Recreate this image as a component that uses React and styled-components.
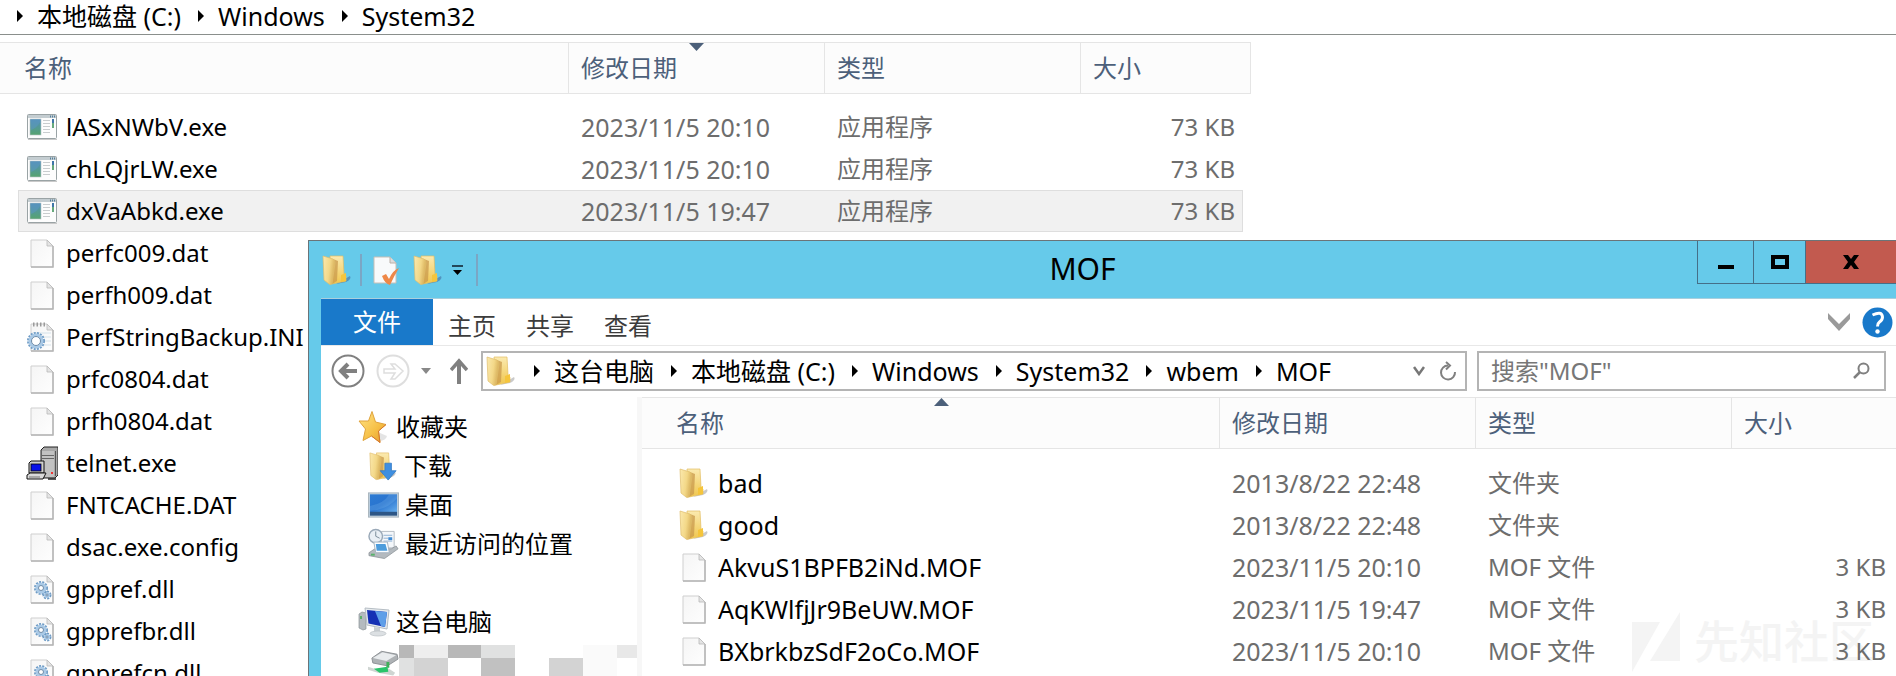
import React from "react";
import styled, { createGlobalStyle, css } from "styled-components";

const GlobalStyle = createGlobalStyle`
  *, *::before, *::after { box-sizing: border-box; }
  body {
    margin: 0;
    background: #fff;
    color: #000;
    font-family: "Noto Sans", "Noto Sans CJK SC", sans-serif;
    font-size: 24px;
    line-height: 32px;
  }
  button, input { font: inherit; color: inherit; }
  a { color: inherit; text-decoration: none; }
  svg { display: block; flex: none; }
`;

const Desktop = styled.div`
  position: relative;
  height: 100vh;
  overflow: hidden;
`;

/* ---------- shared pieces ---------- */

const Trail = styled.nav`
  display: flex;
  align-items: center;
  font-size: 25px;
  white-space: nowrap;
`;

const TrailArrow = styled.svg`
  margin: 0 14px 0 17px;
`;

const Table = styled.table`
  table-layout: fixed;
  width: ${(p) => p.$width || "100%"};
  border-collapse: separate;
  border-spacing: 0;

  tbody::before {
    content: "";
    display: block;
    height: ${(p) => p.$gap};
  }
`;

const HeadCell = styled.th`
  position: relative;
  height: 52px;
  padding: 0 0 0 ${(p) => p.$indent || "12px"};
  background: #fcfcfc;
  border: 0 solid #e5e5e5;
  border-width: 1px ${(p) => (p.$open ? "0" : "1px")} 1px 0;
  color: #4c607a;
  font-weight: 400;
  text-align: left;
`;

const HeadGap = styled.td`
  background: #fcfcfc;
  border: 0 solid #e5e5e5;
  border-width: 1px 0;
`;

const SortMark = styled.svg`
  position: absolute;
  top: 0;
  left: calc(50% - 8px);
`;

const Cell = styled.td`
  height: 42px;
  padding: 0 0 0 12px;
  color: #6d6d6d;
  white-space: nowrap;
  ${(p) => p.$size && css`text-align: right; padding-right: ${p.$size};`}
`;

const DateCell = styled(Cell)`
  font-size: 25px;
`;

const NameCell = styled(Cell)`
  padding-left: ${(p) => p.$indent};
  color: #000;
`;

const Row = styled.tr`
  ${(p) =>
    p.$selected &&
    css`
      ${Cell} {
        background: #f1f1f1;
        border: 0 solid #dedede;
        border-width: 1px 0;
      }
      ${Cell}:nth-child(2) { border-left-width: 1px; padding-left: 7px; }
      ${Cell}:nth-last-child(2) { border-right-width: 1px; padding-right: 7px; }
    `}
`;

const FileName = styled.span`
  display: flex;
  align-items: center;
  gap: 8px;
`;

/* ---------- background window ---------- */

const BackBar = styled.header`
  height: 35px;
  padding-bottom: 2px;
  display: flex;
  align-items: center;
  border-bottom: 1px solid #8a8f8c;
  margin-bottom: 7px;
`;

/* ---------- foreground window ---------- */

const Window = styled.section`
  position: absolute;
  top: 240px;
  left: 308px;
  right: 0;
  bottom: 0;
  display: flex;
  flex-direction: column;
  padding-left: 12px;
  border: 0 solid #6b7478;
  border-width: 1px 0 0 1px;
  background: #66caea;
`;

const TitleBar = styled.header`
  display: flex;
  height: 57px;
  flex: none;
`;

const QuickTools = styled.div`
  display: flex;
  align-items: center;
  height: 57px;
`;

const AppButton = styled.button`
  width: 39px;
  padding: 0;
  border: 0;
  background: none;
`;

const ToolButton = styled.button`
  display: grid;
  place-items: center;
  width: ${(p) => p.$width || "38px"};
  height: 32px;
  padding: 0;
  border: 0;
  background: none;
`;

const ToolDivider = styled.span`
  width: 2px;
  height: 32px;
  background: #7ba6c4;
`;

const Title = styled.h1`
  flex: 1;
  margin: 0;
  padding-right: 10px;
  font-size: 30px;
  font-weight: 400;
  line-height: 56px;
  text-align: center;
`;

const Captions = styled.div`
  display: flex;
  justify-content: flex-end;
  align-items: flex-start;
`;

const CaptionButton = styled.button`
  display: grid;
  place-items: center;
  width: ${(p) => p.$width};
  height: 43px;
  padding: 0;
  border: 0 solid #456f88;
  border-width: 0 0 1px 1px;
  background: ${(p) => (p.$close ? "#c25a4f" : "transparent")};
`;

const Client = styled.div`
  display: flex;
  flex-direction: column;
  flex: 1;
  min-height: 0;
  background: #fff;
`;

const Ribbon = styled.div`
  display: flex;
  align-items: stretch;
  height: 48px;
  flex: none;
  border-bottom: 1px solid #e8e8e8;
  border-top: 1px solid #a9cfdd;
`;

const FileTab = styled.button`
  width: 112px;
  padding: 0;
  border: 0;
  background: #1979ca;
  color: #fff;
`;

const RibbonTab = styled.button`
  width: 78px;
  padding: 8px 0 0;
  border: 0;
  background: none;
  color: #3c3c3c;
`;

const RibbonEnd = styled.div`
  display: flex;
  align-items: center;
  gap: 11px;
  margin-left: auto;
  padding-right: 3px;
`;

const PlainButton = styled.button`
  display: grid;
  place-items: center;
  padding: 0;
  border: 0;
  background: none;
`;

const NavBar = styled.div`
  display: flex;
  align-items: center;
  height: 51px;
  flex: none;
  padding: 0 10px 2px;
`;

const History = styled.div`
  display: flex;
  align-items: center;
  gap: 11px;
  width: 150px;
  flex: none;
`;

const AddressBox = styled.div`
  display: flex;
  align-items: center;
  flex: 1;
  height: 40px;
  margin-right: 10px;
  padding: 0 8px 0 2px;
  border: 2px solid #b4b4b4;
`;

const AddressEnd = styled.div`
  display: flex;
  align-items: center;
  gap: 14px;
  margin-left: auto;
`;

const SearchBox = styled.label`
  display: flex;
  align-items: center;
  width: 409px;
  height: 40px;
  padding: 0 14px 0 12px;
  border: 2px solid #b4b4b4;

  input {
    flex: 1;
    min-width: 0;
    height: 32px;
    padding: 0;
    border: 0;
    outline: 0;
    background: none;
  }
  input::placeholder { color: #777; opacity: 1; }
`;

const Body = styled.div`
  display: flex;
  flex: 1;
  min-height: 0;
`;

const Side = styled.nav`
  width: 321px;
  flex: none;
  padding: 10px 0 0 37px;
  border-right: 5px solid #f7f7f7;
  overflow: hidden;
`;

const SideGroup = styled.div`
  margin-bottom: 39px;
`;

const SideLink = styled.a`
  display: flex;
  align-items: center;
  gap: 6px;
  height: 39px;
  padding-left: ${(p) => (p.$child ? "10px" : "0")};
  white-space: nowrap;
`;

const Redacted = styled.svg`
  margin-left: -6px;
`;

const Files = styled.main`
  position: relative;
  flex: 1;
  min-width: 0;
  overflow: hidden;
`;

const Watermark = styled.div`
  position: absolute;
  right: 22px;
  bottom: 4px;
  display: flex;
  align-items: center;
  gap: 14px;
  color: #f4f4f4;
  font-size: 45px;
  font-weight: 500;
  line-height: 60px;
`;

const FileTable = styled(Table)`
  position: relative;
  z-index: 1;

  ${NameCell} { font-size: 25px; }
`;

/* ---------- icons ---------- */

const Defs = () => (
  <svg width="0" height="0" style={{ position: "absolute" }} aria-hidden="true">
    <defs>
      <linearGradient id="fFront" x1="0" x2="1" y1="0" y2="0.3">
        <stop offset="0" stopColor="#fbe9ae" />
        <stop offset="0.6" stopColor="#f3d888" />
        <stop offset="1" stopColor="#d9b25c" />
      </linearGradient>
      <linearGradient id="fBack" x1="0" x2="0" y1="0" y2="1">
        <stop offset="0" stopColor="#fbeab0" />
        <stop offset="1" stopColor="#f0c64e" />
      </linearGradient>
      <linearGradient id="page" x1="0" x2="1" y1="0" y2="1">
        <stop offset="0" stopColor="#f5f5f5" />
        <stop offset="1" stopColor="#fefefe" />
      </linearGradient>
      <linearGradient id="exe" x1="0" x2="0" y1="0" y2="1">
        <stop offset="0" stopColor="#4f8fbd" />
        <stop offset="1" stopColor="#57a46f" />
      </linearGradient>
      <linearGradient id="sky" x1="0" x2="1" y1="0" y2="1">
        <stop offset="0" stopColor="#2c7bd4" />
        <stop offset="0.5" stopColor="#2a74cf" />
        <stop offset="1" stopColor="#68b0ee" />
      </linearGradient>
      <linearGradient id="star" x1="0" x2="1" y1="0" y2="1">
        <stop offset="0" stopColor="#ffe58a" />
        <stop offset="0.6" stopColor="#f6bf45" />
        <stop offset="1" stopColor="#e39a2b" />
      </linearGradient>
    </defs>
  </svg>
);

const FolderShape = ({ shade = "#bdbdbd" }) => (
  <>
    <path d="M15 30 L29 22 Q31 25 25 28 Z" fill={shade} opacity="0.8" />
    <path d="M9 2 L22 2 L23 20 L25 22 L25 27 L11 30 Z" fill="url(#fBack)" stroke="#e3bd62" strokeWidth="0.7" />
    <path d="M12 5 L17 7 L16 27 L11 30 Z" fill="#c99a4c" opacity="0.75" />
    <path d="M2 2 L12 5 Q14 6 14 9 L11 30 Q9 31 8 30 L3 26 Z" fill="url(#fFront)" stroke="#e0bd6c" strokeWidth="0.7" />
    <path d="M20 21 L25 19 L25 27 L20 28 Z" fill="#f5c53c" />
  </>
);

const Folder = ({ shade }) => (
  <svg width="32" height="32" viewBox="0 0 32 32" aria-hidden="true">
    <FolderShape shade={shade} />
  </svg>
);

const Download = () => (
  <svg width="30" height="32" viewBox="0 0 32 32" aria-hidden="true">
    <FolderShape />
    <path d="M18 13 h7 v8 h5 L21.500 31 L13 21 h5 Z" fill="#3f8fe0" stroke="#2f78c4" strokeWidth="0.8" />
  </svg>
);

const PageShape = () => (
  <>
    <path d="M5 3 H21 L27 9 V30 H5 Z" fill="url(#page)" stroke="#cfcfcf" />
    <path d="M27 9 V30 H5" fill="none" stroke="#b5b5b5" strokeWidth="1.500" />
    <path d="M21 3 V9 H27 Z" fill="#e4e4e4" stroke="#b9b9b9" strokeWidth="0.8" />
  </>
);

const Page = () => (
  <svg width="32" height="32" viewBox="0 0 32 32" aria-hidden="true"><PageShape /></svg>
);

const Gear = ({ cx, cy, r, w }) => (
  <>
    <circle cx={cx} cy={cy} r={r + w / 2 + 0.5} fill="none" stroke="#6f9cc6" strokeWidth="2" strokeDasharray="2 1.200" />
    <circle cx={cx} cy={cy} r={r} fill="none" stroke="#a9c9e6" strokeWidth={w} />
    <circle cx={cx} cy={cy} r={r - w / 2} fill="#fff" stroke="#5f7f9e" strokeWidth="0.9" />
  </>
);

const Dll = () => (
  <svg width="32" height="32" viewBox="0 0 32 32" aria-hidden="true">
    <PageShape />
    <Gear cx={21} cy={22} r={2} w={2} />
    <Gear cx={15} cy={15} r={4} w={3} />
  </svg>
);

const Ini = () => (
  <svg width="32" height="32" viewBox="0 0 32 32" aria-hidden="true">
    <PageShape />
    <path d="M7 3.500 h12" stroke="#9a9a9a" strokeWidth="4" strokeDasharray="1.500 2" />
    <path d="M8 12 h17 M8 16 h17 M8 20 h17 M8 24 h17" stroke="#d5e2ea" />
    <Gear cx={10} cy={20} r={6} w={3} />
  </svg>
);

const Exe = () => (
  <svg width="32" height="32" viewBox="0 0 32 32" aria-hidden="true">
    <rect x="1.500" y="3.500" width="29" height="24" rx="1" fill="#fdfdfd" stroke="#9aa3a5" />
    <path d="M2 4 h28 v3 h-28 z" fill="#c4cdd1" />
    <path d="M24 5.500 h5" stroke="#55809c" strokeWidth="2" strokeDasharray="1 1" />
    <rect x="4" y="8" width="11" height="16" fill="url(#exe)" stroke="#b8c4c8" strokeWidth="0.6" />
    <path d="M5 19 Q11 17 14 11 V9 H5 Z" fill="#5c96c0" opacity="0.6" />
    <path d="M17 9.500 h7 M17 12.500 h7 M17 15.500 h7 M17 18.500 h7 M17 21.500 h7" stroke="#c9cdcf" />
    <rect x="26" y="8" width="2" height="9" fill="#3f76a8" />
    <rect x="26" y="12" width="2" height="5" fill="#67a97c" />
    <path d="M2 28.500 h29" stroke="#c9c9c9" />
  </svg>
);

const Telnet = () => (
  <svg width="32" height="34" viewBox="0 0 32 34" aria-hidden="true">
    <path d="M15 4 L18 1 H32 V29 L29 32 H15 Z" fill="#a9a9a9" stroke="#222" strokeWidth="1" />
    <path d="M16 5 H28 V31 H16 Z" fill="#c2c2c2" />
    <path d="M16 9.500 H28 M16 12.500 H28" stroke="#666" />
    <path d="M29.500 5 V30" stroke="#555" />
    <rect x="25" y="26" width="2" height="2" fill="#e33" />
    <path d="M3 17 L5 15 H18 V27 H3 Z" fill="#d0d0d0" stroke="#111" />
    <rect x="5" y="18" width="10" height="7" fill="#0a12e8" stroke="#000" strokeWidth="0.8" />
    <path d="M1 29 L4 27 H20 L17 33 H1 Z" fill="#dadada" stroke="#111" />
    <path d="M3 31 H14" stroke="#777" />
    <path d="M22 33 H30" stroke="#222" strokeWidth="1.500" />
  </svg>
);

const Star = () => (
  <svg width="32" height="34" viewBox="0 0 32 34" aria-hidden="true">
    <path d="M20 31 Q28 31 29 26 L22 23 Z" fill="#d8d8d8" opacity="0.7" />
    <path d="M14 1.500 L17.500 12 L28 14.500 L20.500 21 L22 32.500 L13.500 26 L5 30.500 L7.500 19 L1 11 L10.500 11 Z" fill="url(#star)" stroke="#e0a33c" />
    <path d="M28 14.500 L20.500 21 L22 32.500 L13.500 26" fill="none" stroke="#d7782e" />
  </svg>
);

const DesktopIcon = () => (
  <svg width="31" height="26" viewBox="0 0 32 26" aria-hidden="true">
    <rect x="0.500" y="0.500" width="31" height="25" fill="#c3d2de" stroke="#a9b5be" />
    <rect x="2" y="2" width="28" height="19" fill="url(#sky)" />
    <path d="M2 14 Q16 12 22 2 H30 V6 Q20 18 2 19 Z" fill="#75b2ec" opacity="0.3" />
    <rect x="2" y="20" width="28" height="4" fill="#2d5686" />
  </svg>
);

const Recent = () => (
  <svg width="31" height="32" viewBox="0 0 32 32" aria-hidden="true">
    <path d="M14 3 H27 V20 H14 Z" fill="#f4f7fa" stroke="#b5bcc3" />
    <path d="M16 7 h9 M16 10 h5 M16 13 h9" stroke="#8fb2d4" />
    <rect x="21" y="9" width="4" height="3" fill="#3f8bd4" />
    <circle cx="8" cy="8" r="7" fill="#e9eff5" stroke="#9aa9b8" strokeWidth="1.500" />
    <path d="M8 3 V8 L12 10" fill="none" stroke="#7a8a9a" />
    <path d="M1 25 L7 21 H24 L29 18 L31 21 L17 31 L1 28 Z" fill="#b4babf" stroke="#8c9297" strokeWidth="0.8" />
    <path d="M6 14 H20 L22 25 H8 Z" fill="#fafdff" stroke="#a6b4c0" />
    <path d="M8 16 H18 L20 23 H9 Z" fill="#4c9cdc" />
    <rect x="3" y="26" width="4" height="2" fill="#59b36b" />
  </svg>
);

const Computer = () => (
  <svg width="32" height="30" viewBox="0 0 32 30" aria-hidden="true">
    <path d="M1 7 L4 5 L8 6 V22 L5 23 L1 21 Z" fill="#b4babf" stroke="#8b9297" strokeWidth="0.7" />
    <rect x="2" y="9" width="2" height="3" fill="#5bb06a" />
    <path d="M7 1 L31 3 L29 22 L9 18 Z" fill="#e7ebee" stroke="#b5bdc4" />
    <path d="M9 3 L29 5 L27 20 L10.500 16.500 Z" fill="#1530b4" />
    <path d="M17 4 L29 5 L27 20 L23 19 Z" fill="#5f9fe8" />
    <path d="M16 20 L22 21 L22 25 L16 25 Z" fill="#c9ced2" />
    <ellipse cx="20" cy="26.500" rx="8" ry="2.500" fill="#dce0e3" stroke="#b9bec3" strokeWidth="0.7" />
  </svg>
);

const Drive = () => (
  <svg width="31" height="30" viewBox="0 0 32 30" aria-hidden="true">
    <path d="M4 12 L14 5 L30 8 L31 13 L20 20 L5 17 Z" fill="#aeb2b5" stroke="#8d9296" />
    <path d="M5 12 L15 6 L29 9 L19 15 Z" fill="#e9ecee" />
    <rect x="19" y="16" width="3" height="6" fill="#3fae5a" />
    <path d="M0 21 L10 24 L20 22 L28 27 L26 30 L10 27 L0 24 Z" fill="#cfd5d2" />
    <path d="M6 23 L20 21 L21 26 L12 27 Z" fill="#29c46a" />
  </svg>
);

const CheckPage = () => (
  <svg width="30" height="32" viewBox="0 0 30 32" aria-hidden="true">
    <path d="M2 3 H18 L24 9 V29 H2 Z" fill="#f8fafb" stroke="#c8bfb6" />
    <path d="M18 3 V9 H24" fill="#ddd" stroke="#b8b0a8" />
    <path d="M10 22 L14 20 L17 25 Q21 16 27 14 Q22 22 18 31 Q13 30 10 22 Z" fill="#ee8848" />
  </svg>
);

const ArrowRight = () => (
  <TrailArrow width="6" height="12" viewBox="0 0 6 12" aria-hidden="true">
    <path d="M0 0 L6 6 L0 12 Z" fill="#000" />
  </TrailArrow>
);

const SortDown = () => (
  <SortMark width="15" height="8" viewBox="0 0 15 8" aria-hidden="true"><path d="M0 0 H15 L7.500 8 Z" fill="#4c607a" /></SortMark>
);

const SortUp = () => (
  <SortMark width="15" height="8" viewBox="0 0 15 8" aria-hidden="true"><path d="M0 8 H15 L7.500 0 Z" fill="#4c607a" /></SortMark>
);

const Mosaic = () => (
  <Redacted width="238" height="32" viewBox="0 0 238 32" aria-label="已隐藏">
    <path d="M0 0h15v13H0zM49 0h33v13H49z" fill="#b8b8b8" />
    <path d="M15 0h34v13H15z" fill="#eeeeee" />
    <path d="M82 0h34v13H82zM0 13h15v19H0z" fill="#e0e1e1" />
    <path d="M184 0h34v32h-34z" fill="#fafafa" />
    <path d="M218 0h20v13h-20z" fill="#e8e8e8" />
    <path d="M15 13h34v19H15zM150 13h34v19h-34z" fill="#d3d3d3" />
    <path d="M82 13h34v19H82z" fill="#c1c1c1" />
  </Redacted>
);

/* ---------- data ---------- */

const icons = { exe: Exe, page: Page, ini: Ini, telnet: Telnet, dll: Dll, folder: Folder };

const systemFiles = [
  { name: "lASxNWbV.exe", icon: "exe", date: "2023/11/5 20:10", type: "应用程序", size: "73 KB" },
  { name: "chLQjrLW.exe", icon: "exe", date: "2023/11/5 20:10", type: "应用程序", size: "73 KB" },
  { name: "dxVaAbkd.exe", icon: "exe", date: "2023/11/5 19:47", type: "应用程序", size: "73 KB", selected: true },
  { name: "perfc009.dat", icon: "page" },
  { name: "perfh009.dat", icon: "page" },
  { name: "PerfStringBackup.INI", icon: "ini" },
  { name: "prfc0804.dat", icon: "page" },
  { name: "prfh0804.dat", icon: "page" },
  { name: "telnet.exe", icon: "telnet" },
  { name: "FNTCACHE.DAT", icon: "page" },
  { name: "dsac.exe.config", icon: "page" },
  { name: "gppref.dll", icon: "dll" },
  { name: "gpprefbr.dll", icon: "dll" },
  { name: "gpprefcn.dll", icon: "dll" },
];

const mofFiles = [
  { name: "bad", icon: "folder", date: "2013/8/22 22:48", type: "文件夹" },
  { name: "good", icon: "folder", date: "2013/8/22 22:48", type: "文件夹" },
  { name: "AkvuS1BPFB2iNd.MOF", icon: "page", date: "2023/11/5 20:10", type: "MOF 文件", size: "3 KB" },
  { name: "AqKWlfjJr9BeUW.MOF", icon: "page", date: "2023/11/5 19:47", type: "MOF 文件", size: "3 KB" },
  { name: "BXbrkbzSdF2oCo.MOF", icon: "page", date: "2023/11/5 20:10", type: "MOF 文件", size: "3 KB" },
];

const Breadcrumbs = ({ parts }) => (
  <Trail aria-label="路径">
    {parts.map((part) => (
      <React.Fragment key={part}>
        <ArrowRight />
        <a href="#path">{part}</a>
      </React.Fragment>
    ))}
  </Trail>
);

const Entry = ({ file }) => {
  const Icon = icons[file.icon];
  return <FileName><Icon />{file.name}</FileName>;
};

export default function App() {
  return (
    <Desktop>
      <GlobalStyle />
      <Defs />
      <BackBar>
        <Breadcrumbs parts={["本地磁盘 (C:)", "Windows", "System32"]} />
      </BackBar>
      <Table $width="1251px" $gap="12px">
        <colgroup>
          <col style={{ width: 18 }} />
          <col style={{ width: 551 }} />
          <col style={{ width: 256 }} />
          <col style={{ width: 256 }} />
          <col style={{ width: 162 }} />
          <col style={{ width: 8 }} />
        </colgroup>
        <thead>
          <tr>
            <HeadCell colSpan={2} $indent="24px">名称</HeadCell>
            <HeadCell>修改日期<SortDown /></HeadCell>
            <HeadCell>类型</HeadCell>
            <HeadCell colSpan={2}>大小</HeadCell>
          </tr>
        </thead>
        <tbody>
          {systemFiles.map((f) => (
            <Row key={f.name} $selected={f.selected}>
              <td />
              <NameCell $indent="8px"><Entry file={f} /></NameCell>
              <DateCell>{f.date}</DateCell>
              <Cell>{f.type}</Cell>
              <Cell $size="8px">{f.size}</Cell>
              <td />
            </Row>
          ))}
        </tbody>
      </Table>

      <Window aria-label="MOF">
        <TitleBar>
          <QuickTools>
            <AppButton aria-label="窗口菜单"><Folder shade="#4d86b4" /></AppButton>
            <ToolDivider />
            <ToolButton $width="50px" aria-label="属性"><CheckPage /></ToolButton>
            <ToolButton $width="26px" aria-label="新建文件夹"><Folder shade="#4d86b4" /></ToolButton>
            <ToolButton aria-label="自定义快速访问工具栏">
              <svg width="11" height="10" viewBox="0 0 11 10"><path d="M0 1 H11" stroke="#24485a" strokeWidth="2" /><path d="M1 5 H10 L5.500 10 Z" /></svg>
            </ToolButton>
            <ToolDivider />
          </QuickTools>
          <Title>MOF</Title>
          <Captions>
            <CaptionButton $width="56px" aria-label="最小化">
              <svg width="16" height="14"><rect y="10" width="16" height="4" /></svg>
            </CaptionButton>
            <CaptionButton $width="52px" aria-label="最大化">
              <svg width="18" height="14"><rect x="2" y="2" width="14" height="10" fill="none" stroke="#000" strokeWidth="4" /></svg>
            </CaptionButton>
            <CaptionButton $width="91px" $close aria-label="关闭">
              <svg width="16" height="14" viewBox="0 0 16 14"><path d="M0 0 h5 l3 4 3-4 h5 L11 7 l5 7 h-5 L8 10 5 14 H0 L5 7 Z" /></svg>
            </CaptionButton>
          </Captions>
        </TitleBar>
        <Client>
          <Ribbon>
            <FileTab>文件</FileTab>
            <RibbonTab>主页</RibbonTab>
            <RibbonTab>共享</RibbonTab>
            <RibbonTab>查看</RibbonTab>
            <RibbonEnd>
              <PlainButton aria-label="展开功能区">
                <svg width="24" height="18" viewBox="0 0 24 18"><path d="M1 0 L12 11 L23 0 V6 L12 18 L1 6 Z" fill="#9a9a9a" /></svg>
              </PlainButton>
              <PlainButton aria-label="帮助">
                <svg width="31" height="31" viewBox="0 0 31 31">
                  <circle cx="15.500" cy="15.500" r="15" fill="#1979ca" />
                  <path d="M10.500 8 Q20 3.500 20.500 10 Q20.500 13 17.500 15 Q15.500 16.500 15.500 19.500" fill="none" stroke="#fff" strokeWidth="3" />
                  <circle cx="15.500" cy="24.500" r="2.200" fill="#fff" />
                </svg>
              </PlainButton>
            </RibbonEnd>
          </Ribbon>
          <NavBar>
            <History>
              <PlainButton aria-label="后退">
                <svg width="34" height="34" viewBox="0 0 34 34" fill="none" stroke="#808080">
                  <circle cx="17" cy="17" r="15.500" strokeWidth="2" />
                  <path d="M26 17 H10 M17 10 L10 17 L17 24" strokeWidth="4" />
                </svg>
              </PlainButton>
              <PlainButton aria-label="前进">
                <svg width="34" height="34" viewBox="0 0 34 34" fill="none" stroke="#dedede">
                  <circle cx="17" cy="17" r="15.500" strokeWidth="2" />
                  <path d="M8 15 H19 L15 10 H19 L27 17 L19 25 H15 L19 19 H8 Z" strokeWidth="1.500" />
                </svg>
              </PlainButton>
              <PlainButton aria-label="最近的位置">
                <svg width="10" height="6" viewBox="0 0 10 6"><path d="M0 0 H10 L5 6 Z" fill="#888" /></svg>
              </PlainButton>
              <ToolButton $width="34px" aria-label="上移">
                <svg width="18" height="26" viewBox="0 0 18 26" fill="none" stroke="#808080"><path d="M9 26 V4" strokeWidth="4" /><path d="M1 12 L9 3 L17 12" strokeWidth="3.500" /></svg>
              </ToolButton>
            </History>
            <AddressBox>
              <Folder />
              <Breadcrumbs parts={["这台电脑", "本地磁盘 (C:)", "Windows", "System32", "wbem", "MOF"]} />
              <AddressEnd>
                <PlainButton aria-label="历史记录">
                  <svg width="12" height="10" viewBox="0 0 12 10"><path d="M1 1 L6 8 L11 1" fill="none" stroke="#777" strokeWidth="2.500" /></svg>
                </PlainButton>
                <PlainButton aria-label="刷新">
                  <svg width="18" height="20" viewBox="0 0 18 20" fill="none" stroke="#808080" strokeWidth="2"><path d="M9 4.500 A7 7 0 1 0 16 11" /><path d="M7 1 L11 4.500 L7 8.500" /></svg>
                </PlainButton>
              </AddressEnd>
            </AddressBox>
            <SearchBox>
              <input type="text" aria-label="搜索" placeholder={'搜索"MOF"'} />
              <svg width="17" height="17" viewBox="0 0 17 17" fill="none" stroke="#808080" strokeWidth="2"><circle cx="10.500" cy="6.500" r="5" /><path d="M7 10 L1 16" strokeWidth="2.500" /></svg>
            </SearchBox>
          </NavBar>
          <Body>
            <Side aria-label="导航窗格">
              <SideGroup>
                <SideLink href="#fav"><Star />收藏夹</SideLink>
                <SideLink href="#downloads" $child><Download />下载</SideLink>
                <SideLink href="#desktop" $child><DesktopIcon />桌面</SideLink>
                <SideLink href="#recent" $child><Recent />最近访问的位置</SideLink>
              </SideGroup>
              <SideGroup>
                <SideLink href="#pc"><Computer />这台电脑</SideLink>
                <SideLink href="#drive" $child><Drive /><Mosaic /></SideLink>
              </SideGroup>
            </Side>
            <Files>
              <FileTable $gap="13px">
                <colgroup>
                  <col style={{ width: 22 }} />
                  <col style={{ width: 556 }} />
                  <col style={{ width: 256 }} />
                  <col style={{ width: 256 }} />
                  <col />
                </colgroup>
                <thead>
                  <tr>
                    <HeadGap />
                    <HeadCell>名称<SortUp /></HeadCell>
                    <HeadCell>修改日期</HeadCell>
                    <HeadCell>类型</HeadCell>
                    <HeadCell $open>大小</HeadCell>
                  </tr>
                </thead>
                <tbody>
                  {mofFiles.map((f) => (
                    <Row key={f.name}>
                      <td />
                      <NameCell $indent="14px"><Entry file={f} /></NameCell>
                      <DateCell>{f.date}</DateCell>
                      <Cell>{f.type}</Cell>
                      <Cell $size="10px">{f.size}</Cell>
                    </Row>
                  ))}
                </tbody>
              </FileTable>
              <Watermark aria-hidden="true">
                <svg width="48" height="60" viewBox="0 0 48 60" fill="currentColor"><path d="M0 10 H28 L0 60 Z M48 0 V49 H18 Z" /></svg>
                先知社区
              </Watermark>
            </Files>
          </Body>
        </Client>
      </Window>
    </Desktop>
  );
}
